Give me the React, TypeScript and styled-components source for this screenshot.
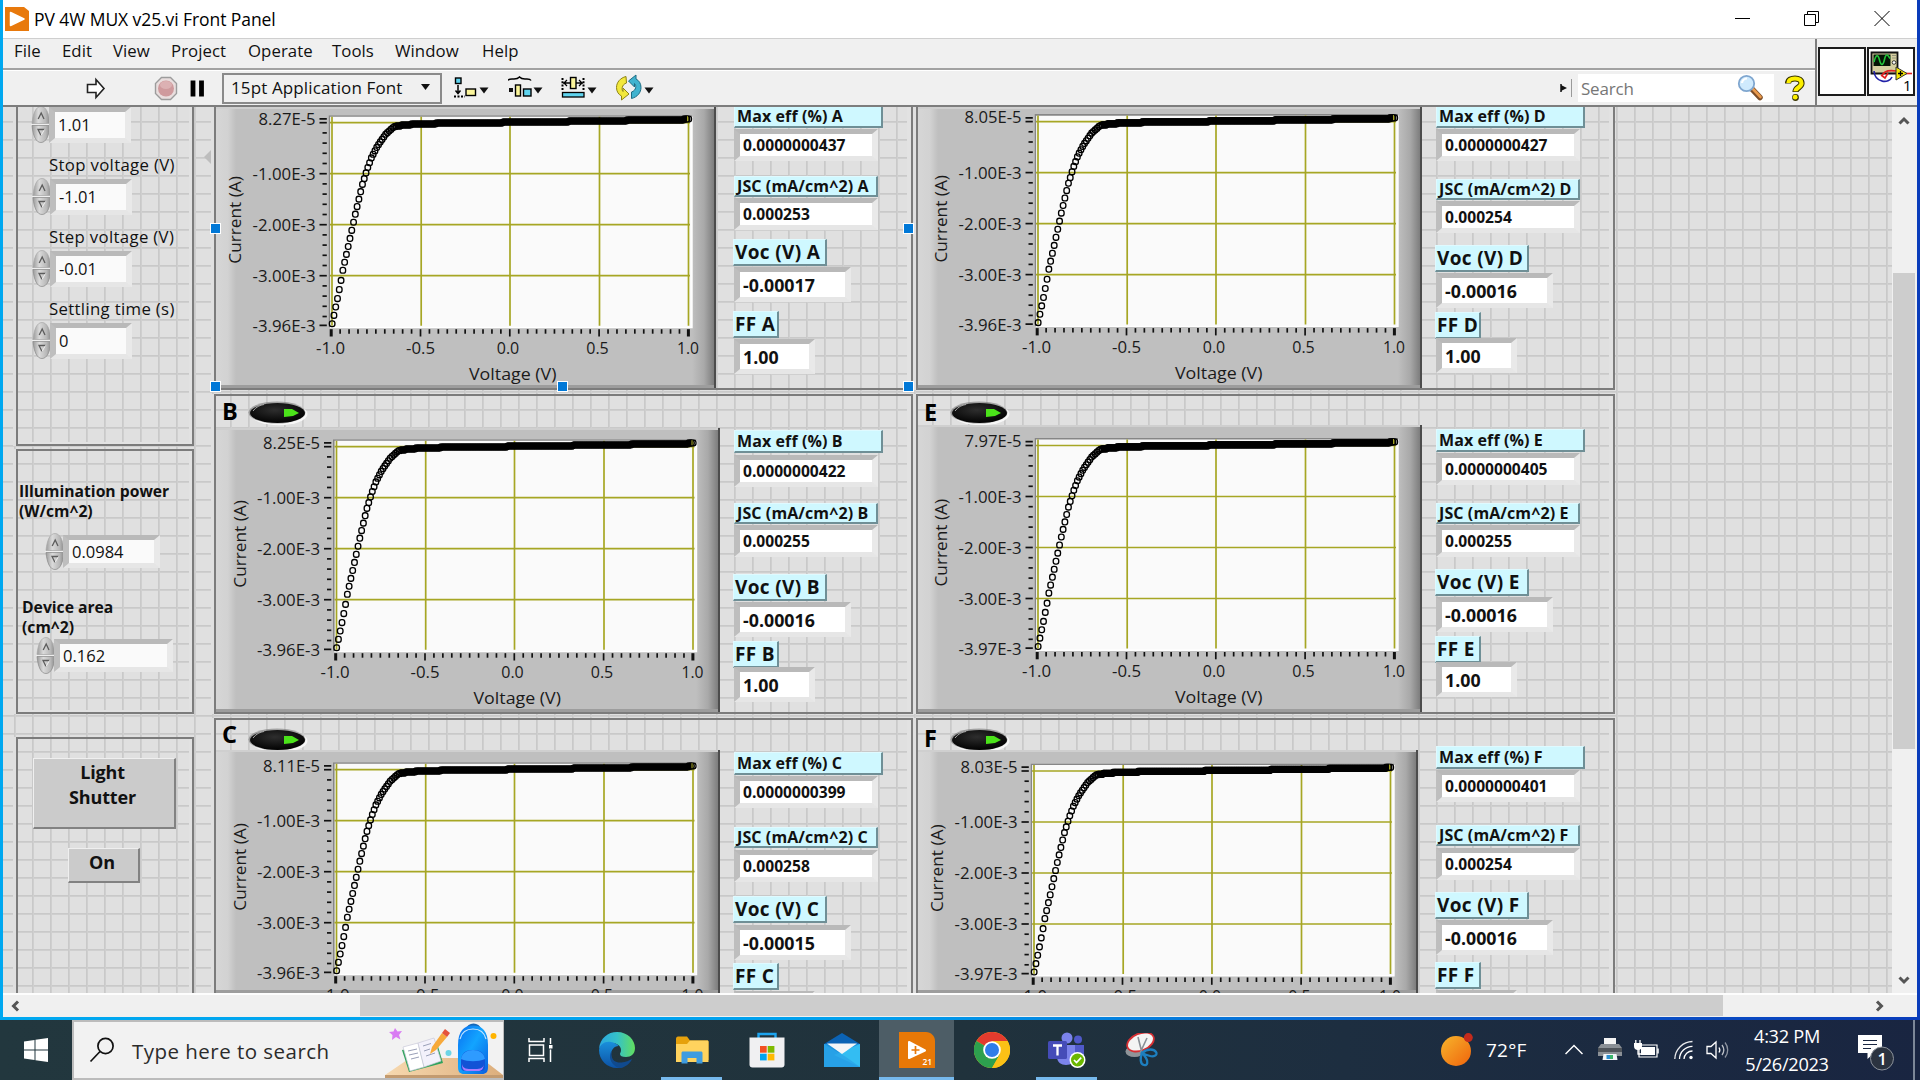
import React from 'react';
import styled, { createGlobalStyle, css } from 'styled-components';

const UI = `"Open Sans", "Noto Sans", sans-serif`;

const GlobalStyle = createGlobalStyle`
  * { box-sizing: border-box; }
  html, body { margin: 0; padding: 0; background: #1c2a3a; overflow: hidden; }
  body { font-family: ${UI}; color: #111; }
  svg { display: block; flex: none; }
`;

const Screen = styled.div`
  width: 1920px;
  height: 1080px;
  display: flex;
  flex-direction: column;
  overflow: hidden;
`;

const Frame = styled.div`
  height: 1020px;
  padding: 0 3px 3px 3px;
  background: linear-gradient(90deg, #00a8f0 0%, #00a0ee 45%, #0a62d0 72%, #0a3cba 100%);
`;

const Win = styled.div`
  height: 1017px;
  display: flex;
  flex-direction: column;
  background: #f0f0f0;
`;

const TitleBar = styled.div`
  height: 38px;
  display: flex;
  align-items: flex-start;
  background: #fff;
  padding: 7px 0 0 2px;
`;

const Title = styled.div`
  margin: -1px 0 0 5px;
  font-size: 17.5px;
  line-height: 26px;
  letter-spacing: -0.08px;
  color: #000;
  white-space: pre;
  flex: 1;
`;

const WinControls = styled.div`
  display: flex;
  padding-top: 3px;
  gap: 53px;
  margin-right: 27px;
`;

const Bars = styled.div`
  height: 69px;
  display: flex;
  border-top: 1px solid #cfcfcf;
  border-bottom: 2px solid #7d7d7d;
`;

const BarsLeft = styled.div`
  width: 1812px;
  display: flex;
  flex-direction: column;
`;

const MenuBar = styled.div`
  height: 31px;
  display: flex;
  align-items: center;
  border-bottom: 2px solid #a2a2a2;
  padding-left: 11px;
`;

const MenuItem = styled.span<{ $w: number }>`
  width: ${(p) => p.$w}px;
  flex: none;
  font-size: 16.8px;
  line-height: 24px;
  letter-spacing: 0.05px;
  padding-bottom: 5px;
  white-space: nowrap;
`;

const ToolBar = styled.div`
  flex: 1;
  display: flex;
  align-items: center;
  border-top: 1px solid #fff;
`;

const FontBox = styled.div`
  width: 220px;
  height: 31px;
  margin-left: 15px;
  margin-right: 12px;
  border: 2px solid #8a8a8a;
  display: flex;
  align-items: center;
  justify-content: space-between;
  padding: 0 10px 2px 7px;
  font-size: 17px;
  letter-spacing: 0.12px;
  white-space: nowrap;
`;

const ToolIcon = styled.div<{ $w: number }>`
  width: ${(p) => p.$w}px;
  flex: none;
  display: flex;
`;

const Spacer = styled.div`
  flex: 1;
`;

const SearchBox = styled.div`
  width: 196px;
  height: 28px;
  margin-left: 6px;
  background: #fff;
  display: flex;
  align-items: center;
  justify-content: space-between;
  padding: 0 10px 0 3px;
  color: #767676;
  font-size: 17px;
  letter-spacing: -0.2px;
`;

const Divider = styled.div`
  width: 1px;
  height: 18px;
  background: #9a9a9a;
  margin-left: 4px;
`;

const HelpSlot = styled.div`
  width: 41px;
  display: flex;
  justify-content: center;
  padding-left: 1px;
`;

const IconPane = styled.div`
  flex: 1;
  border-left: 2px solid #7d7d7d;
  display: flex;
  gap: 1px;
  padding: 8px 0 0 1px;
`;

const PaneBox = styled.div`
  width: 48px;
  height: 49px;
  border: 2px solid #1c1c1c;
  background: #fff;
`;

const Work = styled.div`
  height: 886px;
  display: flex;
`;

const Panel = styled.div`
  position: relative;
  width: 1889px;
  height: 886px;
  overflow: hidden;
  display: flex;
  align-items: flex-start;
  padding-left: 13px;
  background-color: #e0e0e0;
  background-image: repeating-linear-gradient(90deg, transparent 0 11px, #c9c9c9 11px 12px, #cfcfcf 12px 13px, transparent 13px 18px),
    repeating-linear-gradient(180deg, transparent 0 14px, #c9c9c9 14px 15px, #cfcfcf 15px 16px, transparent 16px 18px);
`;

const LeftColumn = styled.div`
  width: 178px;
  margin-right: 20px;
  flex: none;
  display: flex;
  flex-direction: column;
`;

const Box = styled.div<{ $h: number; $gap?: number; $open?: boolean }>`
  height: ${(p) => p.$h}px;
  margin-top: ${(p) => p.$gap || 0}px;
  flex: none;
  display: flex;
  flex-direction: column;
  border: 2px solid #7c7c7c;
  ${(p) => p.$open && css`border-top: 0;`}
  box-shadow: -3px 0 0 #e0e0e0, inset -3px 0 0 #e2e2e2, inset 0 -2px 0 #e2e2e2;
`;

const ControlLabel = styled.div<{ $bold?: boolean; $x?: number; $mt?: number }>`
  margin-left: ${(p) => p.$x || 0}px;
  margin-top: ${(p) => p.$mt || 0}px;
  font-size: ${(p) => (p.$bold ? 15.7 : 16.8)}px;
  font-weight: ${(p) => (p.$bold ? 700 : 400)};
  letter-spacing: ${(p) => (p.$bold ? 0 : 0.32)}px;
  line-height: 20px;
  white-space: pre;
`;

const NumRow = styled.div<{ $x: number; $mt: number }>`
  display: flex;
  align-items: center;
  margin-left: ${(p) => p.$x}px;
  margin-top: ${(p) => p.$mt}px;
  height: 37px;
`;

const Bevel = styled.div<{ $w: number; $h: number; $bold?: boolean; $size?: number; $mt?: number; $ls?: number }>`
  width: ${(p) => p.$w}px;
  height: ${(p) => p.$h}px;
  margin-top: ${(p) => p.$mt || 0}px;
  margin-left: ${(p) => (p.$bold ? 0 : -3)}px;
  flex: none;
  border-style: solid;
  border-width: 5px 6px;
  border-color: #b9b9b9 #e9e9e9 #e6e6e6 #bebebe;
  background: ${(p) => (p.$bold ? '#fff' : '#fafafa')};
  background-clip: padding-box;
  display: flex;
  align-items: center;
  padding-left: 3px;
  padding-bottom: ${(p) => (p.$bold ? 0 : 1)}px;
  font-size: ${(p) => p.$size || 16.5}px;
  font-weight: ${(p) => (p.$bold ? 700 : 400)};
  letter-spacing: ${(p) => p.$ls || 0}px;
  white-space: nowrap;
`;

const PushButton = styled.div<{ $w: number; $h: number; $mt: number; $x: number }>`
  width: ${(p) => p.$w}px;
  height: ${(p) => p.$h}px;
  margin: ${(p) => p.$mt}px 0 0 ${(p) => p.$x}px;
  flex: none;
  background: #cbcbcb;
  border: 1px solid #efefef;
  border-right: 2px solid #828282;
  border-bottom: 2px solid #828282;
  text-align: center;
  font-weight: 700;
  font-size: 18px;
  letter-spacing: -0.15px;
  line-height: 25px;
  padding-top: 1px;
  padding-right: 3px;
`;

const GroupColumn = styled.div`
  width: 702px;
  flex: none;
  display: flex;
  flex-direction: column;
  gap: 4px;
`;

const Group = styled.div<{ $h: number; $open?: boolean }>`
  height: ${(p) => p.$h}px;
  width: 699px;
  flex: none;
  display: flex;
  flex-direction: column;
  border: 2px solid #7c7c7c;
  ${(p) => p.$open && css`border-top: 0;`}
  box-shadow: -3px 0 0 #e0e0e0, inset -4px 0 0 #e2e2e2;
`;

const GroupHead = styled.div<{ $h: number; $ty: number }>`
  height: ${(p) => p.$h}px;
  flex: none;
  display: flex;
  align-items: flex-start;
  padding-left: 6px;
  padding-top: ${(p) => p.$ty}px;
`;

const GroupLetter = styled.div<{ $dy: number }>`
  width: 26px;
  font-weight: 700;
  font-size: 23.5px;
  line-height: 24px;
  margin-top: ${(p) => p.$dy}px;
  color: #000;
`;

const GroupBody = styled.div`
  flex: 1;
  min-height: 0;
  display: flex;
`;

const ChartSlot = styled.div`
  width: 518px;
  flex: none;
`;

const ChartFace = styled.div<{ $w: number }>`
  width: ${(p) => p.$w}px;
  height: 100%;
  overflow: hidden;
  border-right: 2px solid #4c4c4c;
  background: linear-gradient(90deg, #d6d6d6 0, #d2d2d2 12px, #bfbfbf 20px, #bfbfbf calc(100% - 22px), #a9a9a9 calc(100% - 10px), #7d7d7d 100%);
  box-shadow: inset 0 2px 0 #cfcfcf, inset 0 -3px 0 #9d9d9d;
`;

const Readouts = styled.div`
  display: flex;
  flex-direction: column;
`;

const Tag = styled.div<{ $w: number; $h: number; $big?: boolean; $mt: number }>`
  width: ${(p) => p.$w}px;
  height: ${(p) => p.$h}px;
  margin-top: ${(p) => p.$mt}px;
  margin-left: ${(p) => (p.$big ? -1 : 0)}px;
  flex: none;
  background: #cff8ff;
  border: 1px solid #dffaff;
  border-right: 2px solid #6f8f96;
  border-bottom: 2px solid #6f8f96;
  display: flex;
  align-items: center;
  padding-left: ${(p) => (p.$big ? 1 : 2)}px;
  font-weight: 700;
  font-size: ${(p) => (p.$big ? 19 : 16)}px;
  letter-spacing: ${(p) => (p.$big ? 0.35 : 0.1)}px;
  white-space: pre;
`;

const Handle = styled.i<{ $x: number; $y: number }>`
  position: absolute;
  left: ${(p) => p.$x}px;
  top: ${(p) => p.$y}px;
  width: 11px;
  height: 11px;
  background: #0078d7;
  border: 1px solid #fff;
`;

const Collapse = styled.i`
  position: absolute;
  left: 201px;
  top: 43px;
  border: 7px solid transparent;
  border-left: 0;
  border-right-color: #bdbdbd;
`;

const VScroll = styled.div`
  width: 25px;
  display: flex;
  flex-direction: column;
  align-items: center;
  background: #f0f0f0;
  padding: 7px 1px 6px 0;
`;

const VThumb = styled.div`
  width: 22px;
  height: 476px;
  margin: 145px 0 auto;
  background: #cdcdcd;
`;

const HScroll = styled.div`
  flex: 1;
  border-top: 2px solid #fdfdfd;
  display: flex;
  align-items: center;
  padding: 0 31px 1px 6px;
`;

const HThumb = styled.div`
  width: 1363px;
  height: 21px;
  margin: 0 auto 0 337px;
  background: #cdcdcd;
`;

const TaskBar = styled.div`
  height: 60px;
  display: flex;
  background: linear-gradient(90deg, #22373e 0, #20323c 50%, #1d2e40 70%, #192541 100%);
  color: #fff;
`;

const Start = styled.div`
  width: 72px;
  display: flex;
  align-items: center;
  justify-content: center;
`;

const TaskSearch = styled.div`
  width: 432px;
  border: 2px solid #bcbcbc;
  border-right-width: 1px;
  background: #f2f2f2;
  display: flex;
  align-items: center;
  color: #2b2b2b;
  padding-left: 15px;
`;

const TaskSearchText = styled.div`
  margin-left: 17px;
  flex: 1;
  font-size: 20.5px;
  letter-spacing: 0.47px;
  white-space: nowrap;
  padding-top: 2px;
`;

const TaskView = styled.div`
  width: 75px;
  display: flex;
  align-items: center;
  justify-content: center;
`;

const TaskButton = styled.div<{ $open?: boolean; $active?: boolean }>`
  width: 75px;
  display: flex;
  align-items: center;
  justify-content: center;
  ${(p) => p.$active && css`background-color: #4d5d66;`}
  ${(p) => p.$open && css`
    background-image: linear-gradient(#76b9ed, #76b9ed);
    background-size: ${p.$active ? 75 : 61}px 3px;
    background-position: bottom center;
    background-repeat: no-repeat;
  `}
`;

const Tray = styled.div`
  margin-left: auto;
  display: flex;
  align-items: center;
`;

const Temp = styled.div`
  width: 79px;
  margin-left: 13px;
  font-size: 19px;
  letter-spacing: 0.2px;
`;

const TrayIcon = styled.div<{ $w: number }>`
  width: ${(p) => p.$w}px;
  flex: none;
`;

const Clock = styled.div`
  width: 100px;
  text-align: center;
  font-size: 18.2px;
  line-height: 28px;
  letter-spacing: -0.3px;
  white-space: nowrap;
`;

const Notice = styled.div`
  position: relative;
  width: 38px;
  margin-left: 20px;
`;

const Peek = styled.div`
  width: 7px;
  height: 60px;
  margin-left: 18px;
  border-left: 2px solid #7c8797;
`;

/* ---------- small drawings ---------- */

const Caret = () => (
  <svg width="9" height="6" viewBox="0 0 9 6"><path d="M0 0h9L4.500 6z" fill="#111" /></svg>
);

const Chevron = ({ d }: { d: string }) => (
  <svg width="14" height="14" viewBox="0 0 14 14"><path d={d} fill="none" stroke="#555" strokeWidth="3" /></svg>
);

const Spinner = () => (
  <svg width="22" height="37" viewBox="-1 0 22 37">
    <defs>
      <linearGradient id="sp" x1="0" x2="1">
        <stop offset="0" stopColor="#9a9a9a" />
        <stop offset=".35" stopColor="#dadada" />
        <stop offset=".75" stopColor="#b8b8b8" />
        <stop offset="1" stopColor="#8a8a8a" />
      </linearGradient>
    </defs>
    <path d="M1 17.500C2 7 5 .5 10 .5S18 7 19 17.500z" fill="url(#sp)" stroke="#a8a8a8" strokeWidth=".7" />
    <path d="M1 19.500C2 30 5 36.500 10 36.500S18 30 19 19.500z" fill="url(#sp)" stroke="#888" strokeWidth=".7" />
    <path d="M0 18.500h20" stroke="#eee" />
    <path d="M7.200 13l3-6 2.800 6" fill="none" stroke="#5c5c5c" strokeWidth="1.300" />
    <path d="M13.500 23.500H7L10 29.500" fill="none" stroke="#5c5c5c" strokeWidth="1.300" />
    <path d="M13.500 23.500L10 29.500" stroke="#eee" />
  </svg>
);

const Toggle = () => (
  <svg width="60" height="25" viewBox="0 0 60 25">
    <defs>
      <radialGradient id="tg" cx=".45" cy=".35" r=".6">
        <stop offset="0" stopColor="#2e2e2e" />
        <stop offset="1" stopColor="#050505" />
      </radialGradient>
    </defs>
    <ellipse cx="31" cy="13" rx="28.500" ry="11.200" fill="#f8f8f8" />
    <ellipse cx="29" cy="11.500" rx="28.500" ry="11" fill="#777" opacity=".6" />
    <ellipse cx="29.500" cy="12" rx="27.500" ry="10" fill="url(#tg)" />
    <path d="M5 10C8 6 12 4 16 3.500" stroke="#aaa" strokeWidth="1" fill="none" />
    <path d="M36 8h8l7 4-6 3-9 1z" fill="#4be31a" />
  </svg>
);

/* ---------- I-V chart ---------- */

const KNEE: [number, number][] = [
  [-1.8, 208], [0, 201], [5.2, 176.6], [8.5, 160], [10.8, 147], [16, 124], [23.5, 90], [30.2, 62], [35.2, 46],
  [39.5, 34.5], [45.2, 23.5], [53.5, 11.5], [61.8, 4], [71.5, 1.8], [106, 0.4], [220, -1.2], [357, -3.6],
];

function curveAt(x: number) {
  for (let i = 1; i < KNEE.length; i++) {
    const [ax, ay] = KNEE[i - 1];
    const [bx, by] = KNEE[i];
    if (x <= bx) return ay + ((by - ay) * (x - ax)) / (bx - ax);
  }
  return KNEE[KNEE.length - 1][1];
}

const POINTS = Array.from({ length: 201 }, (_, i) => {
  const x = i * 1.783;
  return [x, x < 63 ? curveAt(x) : Math.round(curveAt(x)) + 0.3] as const;
}).filter((p) => p[1] < 204);

const BAND = (() => {
  let d = '';
  for (let x = 63; x < 357; x += 1.783) {
    const y = Math.round(curveAt(x)) + 0.3;
    d += `${d ? 'L' : 'M'}${x.toFixed(1)} ${y}`;
  }
  return d;
})();

const gold = '#a6a624';

function Chart({ ox, oy, top, bottom }: { ox: number; oy: number; top: string; bottom: string }) {
  const yLabels = [
    { t: top, y: -4.2, w: 57 },
    { t: '-1.00E-3', y: 51, w: 63 },
    { t: '-2.00E-3', y: 102, w: 63 },
    { t: '-3.00E-3', y: 153, w: 63 },
    { t: bottom, y: 203, w: 63 },
  ];
  const xLabels = [
    { t: '-1.0', x: -1.5, w: 29 },
    { t: '-0.5', x: 88.5, w: 29 },
    { t: '0.0', x: 176, w: 22.500 },
    { t: '0.5', x: 265.5, w: 22.500 },
    { t: '1.0', x: 356, w: 22 },
  ];
  const minors = Array.from({ length: 20 }, (_, i) => i * 10.2).filter((y) => y < 203);
  return (
    <svg width="504" height="310" viewBox="0 0 504 310" fontFamily={UI} fontSize="16.8" fill="#1a1a1a">
      <g transform={`translate(${ox} ${oy})`}>
        <rect x="-3.500" y="-7.500" width="363.500" height="212" fill="#fafafa" />
        <path d="M-2.700 204.500V-6.700H360" fill="none" stroke="#868686" strokeWidth="1.600" />
        <path d="M360 -6V204.800H-2" fill="none" stroke="#fff" strokeWidth="1.400" />
        <path d="M0 -6V203M89.200 -6V203M178 -6V203M267.500 -6V203M356.500 -6V203M-2 0H358M-2 51H358M-2 102H358M-2 153H358" stroke={gold} strokeWidth="1.700" />
        <g fill="none" stroke="#000" strokeWidth="1.350">
          {POINTS.map(([x, y], i) => (
            <rect key={i} x={x - 2.6} y={y - 2.9} width="5.500" height="5.800" rx="2.300" />
          ))}
        </g>
        <path d={BAND} fill="none" stroke="#000" strokeWidth="7.200" />
        <path d="M355.500 -6.500v5" stroke={gold} strokeWidth="1" />
        {minors.map((y, i) => (
          <path key={i} d={`M${i % 5 ? -9.5 : -12.5} ${y}H-5.200`} stroke="#111" strokeWidth="1.700" />
        ))}
        <path d="M-12.500 -3.800H-5.200M-12.500 202.600H-5.200" stroke="#111" strokeWidth="1.700" />
        {Array.from({ length: 41 }, (_, i) => (
          <path
            key={i}
            d={`M${-0.8 + i * 8.93} 206.500V${i % 10 ? 211 : 213.8}`}
            stroke="#111"
            strokeWidth={i === 0 || i === 40 ? 3 : 1.7}
          />
        ))}
        {yLabels.map((l) => (
          <text key={l.t} x={-16.5 - l.w} y={l.y + 6} textLength={l.w} lengthAdjust="spacingAndGlyphs">{l.t}</text>
        ))}
        {xLabels.map((l) => (
          <text key={l.t} x={l.x - l.w / 2} y={231} textLength={l.w} lengthAdjust="spacingAndGlyphs">{l.t}</text>
        ))}
        <text x="137" y="257.500" textLength="87.500" lengthAdjust="spacingAndGlyphs">Voltage (V)</text>
        <text transform="translate(-91 141) rotate(-90)" textLength="87.500" lengthAdjust="spacingAndGlyphs">Current (A)</text>
      </g>
    </svg>
  );
}

/* ---------- data ---------- */

type Dev = {
  id: string; h: number; head: number; ty: number; dy: number; cw: number; ox: number; oy: number;
  top: string; bottom: string; eff: string; jsc: string; voc: string; gaps: number[];
};

const LEFT: Dev[] = [
  { id: 'A', h: 283, head: 0, ty: 0, dy: 0, cw: 500, ox: 116, oy: 15.7, top: '8.27E-5', bottom: '-3.96E-3', eff: '0.0000000437', jsc: '0.000253', voc: '-0.00017', gaps: [-2, 1, 15, 1, 9, 1, 9, 1] },
  { id: 'B', h: 320, head: 32, ty: 5, dy: -2, cw: 504, ox: 120.5, oy: 18.7, top: '8.25E-5', bottom: '-3.96E-3', eff: '0.0000000422', jsc: '0.000255', voc: '-0.00016', gaps: [2, 2, 16, 1, 17, 1, 4, -1] },
  { id: 'C', h: 277, head: 30, ty: 8, dy: -6, cw: 504, ox: 120.5, oy: 19.7, top: '8.11E-5', bottom: '-3.96E-3', eff: '0.0000000399', jsc: '0.000258', voc: '-0.00015', gaps: [2, 1, 19, 2, 14, 2, 3, 1] },
];

const RIGHT: Dev[] = [
  { id: 'D', h: 283, head: 0, ty: 0, dy: 0, cw: 504, ox: 120, oy: 14.6, top: '8.05E-5', bottom: '-3.96E-3', eff: '0.0000000427', jsc: '0.000254', voc: '-0.00016', gaps: [-2, 1, 18, 1, 12, 1, 4, -1] },
  { id: 'E', h: 320, head: 29, ty: 5, dy: -1, cw: 504, ox: 120, oy: 20.5, top: '7.97E-5', bottom: '-3.97E-3', eff: '0.0000000405', jsc: '0.000255', voc: '-0.00016', gaps: [4, 1, 18, 1, 12, 1, 4, -1] },
  { id: 'F', h: 277, head: 30, ty: 8, dy: -2, cw: 500, ox: 116, oy: 21, top: '8.03E-5', bottom: '-3.97E-3', eff: '0.0000000401', jsc: '0.000254', voc: '-0.00016', gaps: [-4, 1, 23, 2, 12, 1, 7, 1] },
];

function DeviceGroup({ d }: { d: Dev }) {
  const g = d.gaps;
  return (
    <Group $h={d.h} $open={!d.head}>
      {d.head > 0 && (
        <GroupHead $h={d.head} $ty={d.ty}>
          <GroupLetter $dy={d.dy}>{d.id}</GroupLetter>
          <Toggle />
        </GroupHead>
      )}
      <GroupBody>
        <ChartSlot>
          <ChartFace $w={d.cw}><Chart ox={d.ox} oy={d.oy} top={d.top} bottom={d.bottom} /></ChartFace>
        </ChartSlot>
        <Readouts>
          <Tag $w={149} $h={23} $mt={g[0]}>Max eff (%) {d.id}</Tag>
          <Bevel $w={144} $h={32} $mt={g[1]} $bold $size={15.6}>{d.eff}</Bevel>
          <Tag $w={144} $h={21} $mt={g[2]}>JSC (mA/cm^2) {d.id}</Tag>
          <Bevel $w={144} $h={32} $mt={g[3]} $bold $size={15.6}>{d.jsc}</Bevel>
          <Tag $w={94} $h={27} $mt={g[4]} $big>Voc (V) {d.id}</Tag>
          <Bevel $w={117} $h={35} $mt={g[5]} $bold $size={17.8}>{d.voc}</Bevel>
          <Tag $w={46} $h={27} $mt={g[6]} $big>FF {d.id}</Tag>
          <Bevel $w={81} $h={35} $mt={g[7]} $bold $size={17.8}>1.00</Bevel>
        </Readouts>
      </GroupBody>
    </Group>
  );
}

const MENUS: [string, number][] = [
  ['File', 48], ['Edit', 51], ['View', 58], ['Project', 77], ['Operate', 84], ['Tools', 63], ['Window', 87], ['Help', 50],
];

const HANDLES = [[207, 116], [207, 274], [554, 274], [900, 116], [900, 274]];

export default function App() {
  return (
    <>
      <GlobalStyle />
      <Screen>
        <Frame>
          <Win>
            <TitleBar>
              <svg width="24" height="24" viewBox="0 0 24 24">
                <path d="M0 0h19l5 4v20H0z" fill="#e8790c" />
                <path d="M5.500 5.500L19 12 5.500 18.500z" fill="#fff" stroke="#fff" strokeWidth="1.500" strokeLinejoin="round" />
              </svg>
              <Title>PV 4W MUX v25.vi Front Panel</Title>
              <WinControls>
                <svg width="16" height="17" viewBox="0 0 16 17"><path d="M0 8.500h15" stroke="#000" /></svg>
                <svg width="17" height="17" viewBox="0 0 17 17"><path d="M.5 4.500h11v11H.5zM3.500 4V1.500h11v11H12" fill="none" stroke="#000" /></svg>
                <svg width="16" height="17" viewBox="0 0 16 17"><path d="M.5 1l15 15M15.500 1l-15 15" stroke="#000" /></svg>
              </WinControls>
            </TitleBar>

            <Bars>
              <BarsLeft>
                <MenuBar>
                  {MENUS.map(([t, w]) => <MenuItem key={t} $w={w}>{t}</MenuItem>)}
                </MenuBar>
                <ToolBar>
                  <svg width="204" height="34" viewBox="0 0 204 34">
                    <path d="M84.500 13.500h8.500v-5l8 9-8 9v-5h-8.500z" fill="#fff" stroke="#222" strokeWidth="1.600" />
                    <path d="M158.500 6.500h9l6 6v10l-6 6h-9l-6-6v-10z" fill="#e9dede" stroke="#9c9c9c" strokeWidth="1.400" />
                    <circle cx="163" cy="17.500" r="8" fill="#cf9a9d" />
                    <ellipse cx="163" cy="14" rx="6" ry="4" fill="#dcb1b3" />
                    <path d="M190 9.500v16M198.500 9.500v16" stroke="#000" strokeWidth="4.800" />
                  </svg>
                  <FontBox><span>15pt Application Font</span><Caret /></FontBox>
                  <ToolIcon $w={54}>
                    <svg width="36" height="24" viewBox="0 0 36 24">
                      <rect x="1.500" y="2" width="5.500" height="5.500" fill="#5fd3ee" stroke="#000" strokeWidth="1.400" />
                      <path d="M4 9v9M1.500 14.500L4 17.500l2.500-3" stroke="#000" strokeWidth="1.500" fill="none" />
                      <path d="M0 20.500h11" stroke="#000" strokeWidth="2" strokeDasharray="2 1.500" />
                      <rect x="12" y="13" width="9.500" height="6.500" fill="#fbf59b" stroke="#000" strokeWidth="1.400" />
                      <path d="M25.500 11.500h9l-4.500 6z" fill="#111" />
                    </svg>
                  </ToolIcon>
                  <ToolIcon $w={53}>
                    <svg width="36" height="24" viewBox="0 0 36 24">
                      <path d="M0 4.500C1 2.500 3 3 6 3c3 0 4-.3 5.500-2C13 2.700 14 3 17 3s5-.5 6 1.500" fill="none" stroke="#000" strokeWidth="1.500" />
                      <rect x="1" y="12" width="4" height="4" fill="#111" />
                      <rect x="7.500" y="9" width="5" height="11" fill="#fbf59b" stroke="#000" strokeWidth="1.400" />
                      <rect x="15.500" y="13" width="7.500" height="7" fill="#5fd3ee" stroke="#000" strokeWidth="1.400" />
                      <path d="M25.500 11.500h9l-4.500 6z" fill="#111" />
                    </svg>
                  </ToolIcon>
                  <ToolIcon $w={55}>
                    <svg width="36" height="24" viewBox="0 0 36 24">
                      <path d="M1.500 2v12M22.500 2v12" stroke="#000" strokeWidth="2" strokeDasharray="2 1.300" />
                      <path d="M2 7h20M6 4L3 7l3 3M18 4l3 3-3 3" stroke="#000" strokeWidth="1.300" fill="none" />
                      <rect x="9.500" y="1.500" width="5.500" height="11" fill="#fbf59b" stroke="#000" strokeWidth="1.400" />
                      <rect x="1.500" y="16.500" width="21.500" height="4.500" fill="#5fd3ee" stroke="#000" strokeWidth="1.300" />
                      <path d="M26.500 11.500h9l-4.500 6z" fill="#111" />
                    </svg>
                  </ToolIcon>
                  <ToolIcon $w={60}>
                    <svg width="40" height="28" viewBox="0 0 40 28">
                      <path d="M10 2.500C4 4 .5 8.500 .5 13.500c0 4 2 7 5 8.500v4l7.500-6-6-6v3.500C5.500 16 5.500 10.500 10.500 9z" fill="#f2e83c" stroke="#8d8314" strokeWidth="1" />
                      <path d="M15.500 24.500c6-1.500 9.500-6 9.500-11 0-4-2-7-5-8.500V1l-7.500 6 6 6V9.500c2 1.500 2 7-3 8.500z" fill="#40b3cf" stroke="#1d6c84" strokeWidth="1" />
                      <path d="M28.500 13.500h9l-4.500 6z" fill="#111" />
                    </svg>
                  </ToolIcon>
                  <Spacer />
                  <svg width="7" height="8" viewBox="0 0 7 8"><path d="M1 0v8" stroke="#111" strokeWidth="1.500" /><path d="M1 1L7 4 1 7z" fill="#111" /></svg>
                  <Divider />
                  <SearchBox>
                    <span>Search</span>
                    <svg width="28" height="28" viewBox="0 0 28 28">
                      <path d="M16 15l8 8.500" stroke="#7d4e28" strokeWidth="5.500" strokeLinecap="round" />
                      <path d="M16.500 14.500l8 8.500" stroke="#ea9a4c" strokeWidth="2.600" strokeLinecap="round" />
                      <circle cx="10.500" cy="9.500" r="7.700" fill="#cfeafd" stroke="#7fa6cf" strokeWidth="1.800" />
                      <path d="M6 9a5 5 0 015-4.500" stroke="#fff" strokeWidth="2.200" fill="none" />
                    </svg>
                  </SearchBox>
                  <HelpSlot>
                    <svg width="20" height="26" viewBox="0 0 20 26">
                      <path d="M3 8.500c0-3.500 3-5 7-5s6.500 1.800 6.500 4.800c0 4.200-6 4-6 8.700" fill="none" stroke="#3a3600" strokeWidth="6.200" />
                      <circle cx="10.500" cy="22.500" r="3.400" fill="#3a3600" />
                      <path d="M3.500 8c0-3 2.500-4.500 6.500-4.500s6.500 1.800 6.500 4.800c0 4.200-6 4-6 8" fill="none" stroke="#fdf000" strokeWidth="4.200" />
                      <circle cx="10.200" cy="22.200" r="2.400" fill="#fdf000" />
                    </svg>
                  </HelpSlot>
                </ToolBar>
              </BarsLeft>
              <IconPane>
                <PaneBox />
                <PaneBox>
                  <svg width="44" height="45" viewBox="0 0 44 45">
                    <path d="M2.500 3.500h26v21h-26z" fill="#d5cfa0" stroke="#111" strokeWidth="1.800" />
                    <path d="M4.500 5.500h17v11.500h-17z" fill="#041404" />
                    <path d="M5 13c2-8 4-8 5.500-2s3.500 6 5-.5 3-5 5.500-1" fill="none" stroke="#23c43a" strokeWidth="1.600" />
                    <circle cx="25" cy="13.500" r="1.800" fill="#fff" stroke="#111" strokeWidth=".8" />
                    <path d="M23.500 6.500h3.500M23.500 9h3.500" stroke="#555" strokeDasharray="1 1" />
                    <path d="M5 22c1 12 15 13 18 6" fill="none" stroke="#2222a8" strokeWidth="1.600" />
                    <path d="M13 27c2-6 8-6 14-5M12 26l4 3 3-5" fill="none" stroke="#e02222" strokeWidth="1.600" />
                    <path d="M36 24.500h7" stroke="#e02222" strokeWidth="1.600" />
                    <path d="M27 18l11 6.500-11 6.500z" fill="#f4e600" stroke="#333" />
                    <path d="M29 24.500h5M31.500 22v5" stroke="#000" strokeWidth="1.300" />
                    <text x="34" y="41.500" fontSize="15" fontFamily={UI}>1</text>
                  </svg>
                </PaneBox>
              </IconPane>
            </Bars>

            <Work>
              <Panel>
                <LeftColumn>
                  <Box $h={339} $open>
                    <NumRow $x={12} $mt={-1}><Spinner /><Bevel $w={82} $h={36}>1.01</Bevel></NumRow>
                    <ControlLabel $x={31} $mt={12}>Stop voltage (V)</ControlLabel>
                    <NumRow $x={13} $mt={3}><Spinner /><Bevel $w={82} $h={36}>-1.01</Bevel></NumRow>
                    <ControlLabel $x={31} $mt={12}>Step voltage (V)</ControlLabel>
                    <NumRow $x={13} $mt={3}><Spinner /><Bevel $w={82} $h={36}>-0.01</Bevel></NumRow>
                    <ControlLabel $x={31} $mt={12}>Settling time (s)</ControlLabel>
                    <NumRow $x={13} $mt={3}><Spinner /><Bevel $w={82} $h={36}>0</Bevel></NumRow>
                  </Box>
                  <Box $h={265} $gap={3}>
                    <ControlLabel $bold $x={1} $mt={30}>{'Illumination power\n(W/cm^2)'}</ControlLabel>
                    <NumRow $x={26} $mt={12}><Spinner /><Bevel $w={97} $h={33}>0.0984</Bevel></NumRow>
                    <ControlLabel $bold $x={4} $mt={27}>{'Device area\n(cm^2)'}</ControlLabel>
                    <NumRow $x={17} $mt={0}><Spinner /><Bevel $w={119} $h={33}>0.162</Bevel></NumRow>
                  </Box>
                  <Box $h={270} $gap={23}>
                    <PushButton $w={143} $h={71} $mt={19} $x={15}>Light<br />Shutter</PushButton>
                    <PushButton $w={72} $h={35} $mt={19} $x={50}>On</PushButton>
                  </Box>
                </LeftColumn>
                <GroupColumn>{LEFT.map((d) => <DeviceGroup key={d.id} d={d} />)}</GroupColumn>
                <GroupColumn>{RIGHT.map((d) => <DeviceGroup key={d.id} d={d} />)}</GroupColumn>
                <Collapse />
                {HANDLES.map(([x, y]) => <Handle key={`${x}-${y}`} $x={x} $y={y} />)}
              </Panel>
              <VScroll>
                <Chevron d="M2.500 9.500L7 5l4.500 4.500" />
                <VThumb />
                <Chevron d="M2.500 4.500L7 9l4.500-4.500" />
              </VScroll>
            </Work>
            <HScroll>
              <Chevron d="M9 2.500L4.500 7 9 11.500" />
              <HThumb />
              <Chevron d="M5 2.500L9.500 7 5 11.500" />
            </HScroll>
          </Win>
        </Frame>

        <TaskBar>
          <Start>
            <svg width="24" height="24" viewBox="0 0 24 24">
              <path d="M0 3.500L10.500 2v9.500H0zM11.500 1.800L24 0v11.500H11.500zM0 12.500h10.500V22L0 20.500zM11.500 12.500H24V24l-12.500-1.800z" fill="#fff" />
            </svg>
          </Start>
          <TaskSearch>
            <svg width="26" height="26" viewBox="0 0 26 26">
              <circle cx="16.500" cy="9" r="7.600" fill="none" stroke="#111" strokeWidth="1.700" />
              <path d="M11 14.500L1.500 24.500" stroke="#111" strokeWidth="1.700" />
            </svg>
            <TaskSearchText>Type here to search</TaskSearchText>
            <svg width="118" height="56" viewBox="0 0 118 56">
              <defs>
                <linearGradient id="desk" x1="0" x2="1"><stop offset="0" stopColor="#f7d9b0" /><stop offset="1" stopColor="#dcae7c" /></linearGradient>
                <linearGradient id="bag" x1="0" x2="1" y2="1"><stop offset="0" stopColor="#0a6ff0" /><stop offset=".45" stopColor="#12a4ff" /><stop offset="1" stopColor="#0a5fe0" /></linearGradient>
              </defs>
              <path d="M0 53L25 36H96L118 53z" fill="url(#desk)" />
              <path d="M0 53h118v3H0z" fill="#c39b70" />
              <path d="M10 6l2.500 3.500L17 9l-3 4 1.500 4.500L11 15l-4 3 .5-5L4 10l4.500-.5z" fill="#d97bf3" />
              <path d="M17 28l7 22 34-9-6-20z" fill="#2fa35c" />
              <path d="M18 25l15-4 6 24-14 4z" fill="#fff" stroke="#c9c9d8" strokeWidth=".7" />
              <path d="M33 21l16-5 7 23-17 6z" fill="#f3f1fb" stroke="#c9c9d8" strokeWidth=".7" />
              <path d="M23 29l9-2M24 33l9-2M26 37l8-2M38 24l8-2.500M39 29l6-2M41 34l9-3" stroke="#9aa0b8" />
              <path d="M45 32l2-7 10-14 5 4-11 13z" fill="#f7a93b" />
              <path d="M57 11l3-4 5 4-3 4z" fill="#e5533c" />
              <circle cx="63.500" cy="31" r="3" fill="#6cd4e6" />
              <circle cx="108.500" cy="14" r="3" fill="#ffb400" />
              <path d="M82 8c1-7 12-7 13 0" fill="none" stroke="#1667b7" strokeWidth="2.500" />
              <path d="M73 23C73 9 79 3.500 88 3.500s15 5.500 15 19.500v22c0 5-2 7-6 7H79c-4 0-6-2-6-7z" fill="url(#bag)" />
              <path d="M75 17c2-8 7-10 13-10s11 2 13 10" fill="none" stroke="#bfe3ff" strokeWidth="1.200" />
              <path d="M76 39c0-8 5-11 12-11s12 3 12 11v6c0 3-2 4-4 4H80c-2 0-4-1-4-4z" fill="#1253d6" />
              <path d="M76 37c1-6 6-9 12-9s11 3 12 9c-7 3-17 3-24 0z" fill="#2e9bff" />
              <path d="M77 42c1 5 5 5 11 5s10 0 11-5c-1 5-2 7-6 7H82c-4 0-5-3-5-7z" fill="#a97bff" />
            </svg>
          </TaskSearch>
          <TaskView>
            <svg width="28" height="26" viewBox="0 0 28 26" fill="none" stroke="#fff" strokeWidth="1.500">
              <path d="M1 1v3.500h15V1M1 25v-3.500h15V25M1.500 8h14v10.500h-14zM22.500 1v6M22.500 12.500V25" />
              <path d="M21 8h3.500v3.500H21z" fill="#fff" stroke="none" />
            </svg>
          </TaskView>
          <TaskButton>
            <svg width="36" height="36" viewBox="0 0 36 36">
              <defs>
                <linearGradient id="e1" x1="0" x2="1"><stop offset="0" stopColor="#2aa6e0" /><stop offset=".5" stopColor="#35c1c9" /><stop offset="1" stopColor="#62de5e" /></linearGradient>
                <linearGradient id="e2" x1="0" y1="0" x2="0" y2="1"><stop offset="0" stopColor="#1a8fdb" /><stop offset="1" stopColor="#0d52a5" /></linearGradient>
              </defs>
              <path d="M0 17C1 6 9 0 18 0c11 0 18 8 18 16 0 6-4 9-9 9-4 0-6-1-6-3 0-1 1-1.500 1-4 0-4-4-7-9-7C7 11 2 13 0 17z" fill="url(#e1)" />
              <path d="M0 18C1 12 6 9 12 10c3 .4 6 2 7.500 4C15 14 12 18 12 23c0 6 6 12 12 12-2 .8-4 1-6 1C8 36 0 28 0 18z" fill="url(#e2)" />
              <path d="M12.500 22c0 7 5 9 10 8.500 4-.4 8-2 10.500-3.500-2 4.500-6.500 8.500-12 9-6-1-10.500-7-10-12 .3-3 1-4 1.500-5z" fill="#104a8e" />
            </svg>
          </TaskButton>
          <TaskButton $open>
            <svg width="34" height="28" viewBox="0 0 34 28">
              <path d="M1 3c0-1.500.8-2.500 2-2.500h9l3 4H32c1 0 1.500.7 1.500 1.500v18H1z" fill="#e6a10c" />
              <path d="M1 8h11l3-3.500h17.500c.6 0 1 .5 1 1V26H1z" fill="#ffd35e" />
              <path d="M6.500 27.500V17c0-1 .7-1.500 1.500-1.500h18c.8 0 1.500.5 1.500 1.500v10.500h-6V22h-9v5.500z" fill="#3f9ce0" />
            </svg>
          </TaskButton>
          <TaskButton>
            <svg width="36" height="36" viewBox="0 0 36 36">
              <path d="M9.500 7V2h17v5" fill="none" stroke="#1da4ef" strokeWidth="2.400" />
              <path d="M.5 5.500h35v27c0 2-1 3-3 3h-29c-2 0-3-1-3-3z" fill="#f0f0f2" />
              <path d="M11 14h6.700v6.700H11z" fill="#f25022" /><path d="M18.700 14h6.700v6.700h-6.700z" fill="#7fba00" />
              <path d="M11 21.700h6.700v6.700H11z" fill="#00a4ef" /><path d="M18.700 21.700h6.700v6.700h-6.700z" fill="#ffb900" />
            </svg>
          </TaskButton>
          <TaskButton>
            <svg width="36" height="34" viewBox="0 0 36 34">
              <path d="M0 11L18 0l18 11z" fill="#0b63b5" />
              <path d="M0 11h36v23H0z" fill="#1c93de" />
              <path d="M36 11v23L10 22z" fill="#33bdf2" />
              <path d="M3 10.500h30L18 21z" fill="#f4f6f8" />
              <path d="M0 11l22 13L36 34H0z" fill="#2aa5e8" opacity=".8" />
            </svg>
          </TaskButton>
          <TaskButton $open $active>
            <svg width="36" height="36" viewBox="0 0 36 36">
              <path d="M0 0h27c5 0 9 4 9 9v27H0z" fill="#e77807" />
              <path d="M10 10l16 8.500L10 26z" fill="#fff" stroke="#fff" strokeWidth="2" strokeLinejoin="round" />
              <path d="M12.500 18h8M16.500 14v8" stroke="#e77807" strokeWidth="1.700" />
              <text x="23.500" y="33" fontSize="8.500" fontWeight="600" fill="#fff" fontFamily={UI}>21</text>
            </svg>
          </TaskButton>
          <TaskButton>
            <svg width="36" height="36" viewBox="0 0 36 36">
              <circle cx="18" cy="18" r="18" fill="#fbc116" />
              <path d="M18 18L2.400 9A18 18 0 0133.600 9z" fill="#e33b2e" />
              <path d="M18 18L2.400 9A18 18 0 0018 36l7.800-13.500z" fill="#2da04e" />
              <path d="M18 9h15.600A18 18 0 0118 36l7.800-13.500z" fill="#fbc116" />
              <circle cx="18" cy="18" r="8.800" fill="#fff" /><circle cx="18" cy="18" r="7" fill="#2f7de9" />
            </svg>
          </TaskButton>
          <TaskButton $open>
            <svg width="38" height="36" viewBox="0 0 38 36">
              <circle cx="30" cy="7.500" r="4" fill="#5059c9" /><path d="M25 13h11v11c0 4-3 6-6 6h-5z" fill="#5059c9" />
              <circle cx="19" cy="6" r="5.500" fill="#7b83eb" /><path d="M9 13h18v12c0 5-4 8-9 8s-9-3-9-8z" fill="#7b83eb" />
              <rect x="0" y="9" width="19" height="18" rx="1.500" fill="#454cb8" />
              <path d="M5 13.500h9M9.500 13.500v10" stroke="#fff" strokeWidth="2.300" />
              <circle cx="29.500" cy="28" r="8" fill="#fff" /><circle cx="29.500" cy="28" r="6.500" fill="#6bb700" />
              <path d="M26 28l2.500 2.600 4.700-5" fill="none" stroke="#fff" strokeWidth="1.700" />
            </svg>
          </TaskButton>
          <TaskButton>
            <svg width="34" height="34" viewBox="0 0 34 34">
              <ellipse cx="9.500" cy="18.500" rx="9" ry="5.500" fill="#8f9499" />
              <ellipse cx="15.500" cy="9" rx="14" ry="8.500" fill="#f4f4f4" stroke="#d62f33" strokeWidth="1.800" transform="rotate(-22 15.500 9)" />
              <path d="M13 4l4 16M22 5L15 20" stroke="#8a8f96" strokeWidth="1.600" />
              <path d="M17 20c6-5 12-4 14-1s-2 5-6 4-6-2-8-3zm0 0c-2 5-2 11 2 12s4-4 2-7-3-4-4-5z" fill="none" stroke="#1d7fc0" strokeWidth="2.300" />
            </svg>
          </TaskButton>

          <Tray>
            <svg width="34" height="34" viewBox="0 0 34 34">
              <defs><linearGradient id="sun" x1="0" y1="0" x2="1" y2="1"><stop offset="0" stopColor="#f7b52c" /><stop offset="1" stopColor="#f0640c" /></linearGradient></defs>
              <circle cx="17" cy="18" r="15" fill="url(#sun)" /><circle cx="29.300" cy="4.600" r="4.500" fill="#c42b1c" />
            </svg>
            <Temp>72°F</Temp>
            <TrayIcon $w={33}><svg width="18" height="18" viewBox="0 0 18 18"><path d="M.5 13L9 4.500l8.500 8.500" fill="none" stroke="#fff" strokeWidth="1.500" /></svg></TrayIcon>
            <TrayIcon $w={36}>
              <svg width="24" height="24" viewBox="0 0 24 24">
                <path d="M6 0h12v7H6z" fill="#f4f4f4" /><path d="M3 6h18l3 4v8H0v-8z" fill="#8b9096" /><path d="M0 10h24v4H0z" fill="#50555b" />
                <path d="M5.500 16h13l1 6H4.500z" fill="#f2f6f9" /><path d="M8.500 17h6v4h-6z" fill="#2c8fd0" /><path d="M12 17h3v4h-3z" fill="#3bb56b" />
              </svg>
            </TrayIcon>
            <TrayIcon $w={40}>
              <svg width="25" height="20" viewBox="0 0 25 20">
                <path d="M5 5h18v12H5z" fill="none" stroke="#fff" strokeWidth="1.200" /><path d="M7 7h14v8H7z" fill="#fff" /><path d="M24 8.500v5" stroke="#fff" strokeWidth="1.500" />
                <path d="M0 3h8v3a4 4 0 01-8 0z" fill="#fff" /><path d="M1.800 0v3M6 0v3M4 9v5h3" fill="none" stroke="#fff" strokeWidth="1.300" />
              </svg>
            </TrayIcon>
            <TrayIcon $w={32}>
              <svg width="20" height="20" viewBox="0 0 20 20" fill="none" stroke="#fff" strokeWidth="1.300">
                <path d="M.8 19A18 18 0 0118.500 1.500" opacity=".9" /><path d="M5.500 19A13 13 0 0118.500 6.300" /><path d="M10 19a8.500 8.500 0 018.500-8" />
                <circle cx="17" cy="17.500" r="1.700" fill="#fff" stroke="none" />
              </svg>
            </TrayIcon>
            <TrayIcon $w={31}>
              <svg width="24" height="20" viewBox="0 0 24 20" fill="none" stroke="#fff" strokeWidth="1.300">
                <path d="M1 6.500h4L10 2v16l-5-4.500H1z" /><path d="M13 7.500c1 1.500 1 3.500 0 5" /><path d="M16 5c2.200 3 2.200 7 0 10" opacity=".7" /><path d="M19 2.500c3.600 4.500 3.600 10.500 0 15" opacity=".5" />
              </svg>
            </TrayIcon>
            <Clock>4:32 PM<br />5/26/2023</Clock>
            <Notice>
              <svg width="38" height="44" viewBox="0 0 38 44">
                <path d="M1 7h24v18H17l-6.500 6v-6H1z" fill="#fff" />
                <path d="M6 12.500h14M6 16.500h14M6 20.500h8" stroke="#1a2742" strokeWidth="1.200" />
                <circle cx="25" cy="30.500" r="11.500" fill="#2b3340" stroke="#8c929b" />
                <text x="20.500" y="36.500" fontSize="16.500" fontWeight="600" fill="#fff" fontFamily={UI}>1</text>
              </svg>
            </Notice>
            <Peek />
          </Tray>
        </TaskBar>
      </Screen>
    </>
  );
}
